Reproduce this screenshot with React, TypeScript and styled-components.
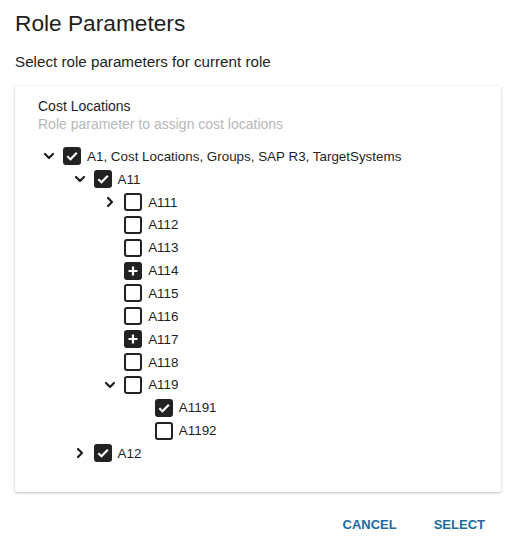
import React from "react";
import styled, { createGlobalStyle } from "styled-components";

const GlobalStyle = createGlobalStyle`
  html, body {
    margin: 0;
    padding: 0;
    background: #ffffff;
    font-family: "Liberation Sans", Arial, sans-serif;
    color: #212121;
  }
`;

type Node = {
  label: string;
  state: "checked" | "unchecked" | "partial";
  expander?: "open" | "closed";
  children?: Node[];
};

const tree: Node[] = [
  {
    label: "A1, Cost Locations, Groups, SAP R3, TargetSystems",
    state: "checked",
    expander: "open",
    children: [
      {
        label: "A11",
        state: "checked",
        expander: "open",
        children: [
          { label: "A111", state: "unchecked", expander: "closed" },
          { label: "A112", state: "unchecked" },
          { label: "A113", state: "unchecked" },
          { label: "A114", state: "partial" },
          { label: "A115", state: "unchecked" },
          { label: "A116", state: "unchecked" },
          { label: "A117", state: "partial" },
          { label: "A118", state: "unchecked" },
          {
            label: "A119",
            state: "unchecked",
            expander: "open",
            children: [
              { label: "A1191", state: "checked" },
              { label: "A1192", state: "unchecked" },
            ],
          },
        ],
      },
      { label: "A12", state: "checked", expander: "closed" },
    ],
  },
];

const Dialog = styled.div`
  width: 520px;
  height: 543px;
  box-sizing: border-box;
  padding: 9px 19px 0 15px;
  display: flex;
  flex-direction: column;
`;

const Title = styled.h2`
  margin: 0;
  font-size: 22.7px;
  font-weight: 400;
  line-height: 28px;
  color: #1e1e1e;
`;

const Subtitle = styled.p`
  margin: 15px 0 0;
  font-size: 15.2px;
  line-height: 20px;
  color: #1e1e1e;
`;

const Card = styled.div`
  margin-top: 14px;
  height: 406px;
  box-sizing: border-box;
  padding: 11px 23px;
  background: #fff;
  border-radius: 2px;
  box-shadow: 0 1px 3px rgba(0, 0, 0, 0.25), 0 0 1px rgba(0, 0, 0, 0.08);
`;

const ParamName = styled.div`
  font-size: 14px;
  line-height: 18px;
  color: #1e1e1e;
`;

const ParamHint = styled.div`
  font-size: 14px;
  line-height: 18px;
  color: #b8b8b8;
`;

const TreeList = styled.div`
  margin-top: 12px;
  display: flex;
  flex-direction: column;
`;

const Row = styled.div<{ $depth: number }>`
  display: flex;
  align-items: center;
  height: 22.85px;
  padding-left: ${(p) => p.$depth * 30.6 + 2}px;
`;

const Expander = styled.span`
  width: 18px;
  height: 18px;
  display: flex;
  align-items: center;
  justify-content: center;
  margin-right: 5px;
`;

const Box = styled.span<{ $filled: boolean }>`
  width: 18px;
  height: 18px;
  box-sizing: border-box;
  border-radius: 3px;
  border: 2px solid #222;
  background: ${(p) => (p.$filled ? "#222" : "#fff")};
  display: flex;
  align-items: center;
  justify-content: center;
  flex-shrink: 0;
`;

const Label = styled.span`
  margin-left: 6px;
  font-size: 13.4px;
  color: #1e1e1e;
  white-space: nowrap;
`;

const Actions = styled.div`
  display: flex;
  justify-content: flex-end;
  gap: 21px;
  margin-top: 19px;
  margin-right: 8px;
`;

const ActionButton = styled.button`
  background: none;
  border: none;
  padding: 6px 8px;
  font-family: "Liberation Sans", Arial, sans-serif;
  font-size: 13px;
  font-weight: 700;
  text-transform: uppercase;
  color: #1b6aa3;
  cursor: pointer;
`;

const Chevron = ({ open }: { open: boolean }) => (
  <svg width="12" height="12" viewBox="0 0 12 12">
    <path
      d={open ? "M2 4 L6 8 L10 4" : "M4 2 L8 6 L4 10"}
      fill="none"
      stroke="#1e1e1e"
      strokeWidth="2.2"
      strokeLinecap="round"
      strokeLinejoin="round"
    />
  </svg>
);

const Mark = ({ state }: { state: Node["state"] }) => {
  if (state === "checked")
    return (
      <svg width="14" height="14" viewBox="0 0 14 14">
        <path d="M2.3 7.2 L5.5 10.3 L11.8 3.7" fill="none" stroke="#fff" strokeWidth="2.2" />
      </svg>
    );
  if (state === "partial")
    return (
      <svg width="12" height="12" viewBox="0 0 12 12">
        <path d="M6 1.5 V10.5 M1.5 6 H10.5" fill="none" stroke="#fff" strokeWidth="2.2" />
      </svg>
    );
  return null;
};

const TreeRows = ({ nodes, depth }: { nodes: Node[]; depth: number }) => (
  <>
    {nodes.map((n) => (
      <React.Fragment key={n.label}>
        <Row $depth={depth}>
          <Expander>{n.expander && <Chevron open={n.expander === "open"} />}</Expander>
          <Box $filled={n.state !== "unchecked"}>
            <Mark state={n.state} />
          </Box>
          <Label>{n.label}</Label>
        </Row>
        {n.expander === "open" && n.children && (
          <TreeRows nodes={n.children} depth={depth + 1} />
        )}
      </React.Fragment>
    ))}
  </>
);

export default function App() {
  return (
    <>
      <GlobalStyle />
      <Dialog>
        <Title>Role Parameters</Title>
        <Subtitle>Select role parameters for current role</Subtitle>
        <Card>
          <ParamName>Cost Locations</ParamName>
          <ParamHint>Role parameter to assign cost locations</ParamHint>
          <TreeList>
            <TreeRows nodes={tree} depth={0} />
          </TreeList>
        </Card>
        <Actions>
          <ActionButton>Cancel</ActionButton>
          <ActionButton>Select</ActionButton>
        </Actions>
      </Dialog>
    </>
  );
}
